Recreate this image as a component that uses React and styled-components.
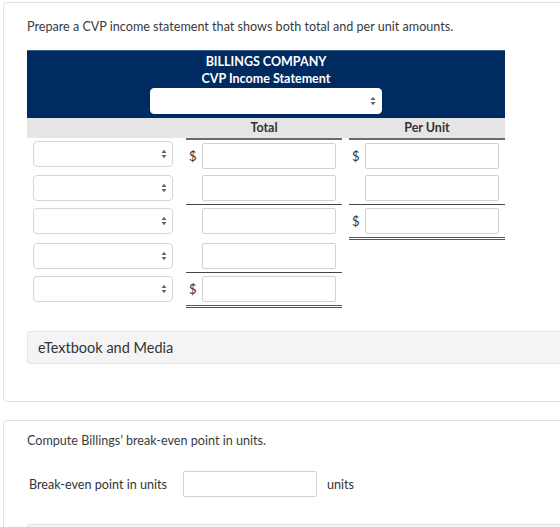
import React from 'react';
import styled, { createGlobalStyle } from 'styled-components';

const GlobalStyle = createGlobalStyle`
  html, body {
    margin: 0;
    padding: 0;
    background: #fff;
    overflow: hidden;
  }
  body {
    font-family: Lato, "Open Sans", Arial, sans-serif;
    color: #333;
  }
`;

const Page = styled.div`
  width: 560px;
  padding-top: 2px;
`;

const Panel = styled.section`
  margin: 0 -40px 18px 3px;
  padding: ${(p) => p.$pad || '15px 23px 37px 23px'};
  border: 1px solid #e2e2e2;
  border-radius: 4px;
  background: #fff;
`;

const Prompt = styled.p`
  margin: 0 0 ${(p) => p.$gap || 14}px;
  font-size: 12.6px;
  line-height: 18px;
  color: #3b3b3b;
`;

const Statement = styled.div`
  width: 478px;
`;

const Banner = styled.div`
  display: flex;
  flex-direction: column;
  align-items: center;
  padding: 2px 0 4px;
  border-top: 1px solid #3d5f8f;
  background: #002b60;
  color: #fff;
  font-size: 12.5px;
  font-weight: 700;
  line-height: 17px;
`;

const Dropdown = styled.div`
  display: flex;
  align-items: center;
  justify-content: flex-end;
  box-sizing: border-box;
  width: ${(p) => p.$width}px;
  height: 26px;
  margin: ${(p) => p.$margin || 0};
  padding-right: 5px;
  border: 1px solid ${(p) => (p.$onDark ? '#fff' : '#d6d6d6')};
  border-radius: 4px;
  background: #fff;
`;

const Row = styled.div`
  display: grid;
  grid-template-columns: 152px 156px 156px;
  column-gap: 7px;
`;

const HeadRow = styled(Row)`
  background: #e5e5e5;
  font-size: 12.5px;
  font-weight: 700;
  line-height: 20px;
  color: #333;
`;

const HeadCell = styled.div`
  text-align: center;
`;

const rules = {
  none: 'none',
  single: '1px solid #444',
  double: '3px double #555',
  head: '2px solid #6a6a6a',
};

const Cell = styled.div`
  display: flex;
  align-items: flex-start;
  padding: 3px ${(p) => (p.$label ? '0' : '6px')} 3px ${(p) => (p.$label ? '6px' : '3px')};
  border-top: ${(p) => rules[p.$top || 'none']};
  border-bottom: ${(p) => rules[p.$bottom || 'none']};
`;

const Dollar = styled.span`
  flex: 0 0 13px;
  font-size: 13px;
  line-height: 26px;
  color: #333;
`;

const Field = styled.input`
  box-sizing: border-box;
  width: ${(p) => (p.$width ? `${p.$width}px` : 'auto')};
  flex: ${(p) => (p.$width ? 'none' : 1)};
  min-width: 0;
  height: 26px;
  margin: 0;
  padding: 0 6px;
  border: 1px solid #d2d2d2;
  border-radius: 2px;
  background: #fff;
  font: inherit;
  outline: none;
`;

const MediaBar = styled.div`
  margin-top: ${(p) => p.$top || 23}px;
  padding: 0 10px;
  height: 31px;
  border: 1px solid #e3e3e3;
  border-radius: 3px;
  background: #f4f4f4;
  font-size: 14.5px;
  line-height: 31px;
  color: #333;
`;

const AnswerRow = styled.div`
  display: flex;
  align-items: center;
  gap: 16px;
  padding-left: 2px;
  font-size: 12.6px;
  color: #333;
`;

const Unit = styled.span`
  margin-left: -6px;
`;

const Arrows = () => (
  <svg width="6" height="10" viewBox="0 0 6 10" aria-hidden="true">
    <path d="M0.5 4 L3 0.8 L5.5 4 Z M0.5 6 L3 9.2 L5.5 6 Z" fill="#666" />
  </svg>
);

const rows = [
  { total: { dollar: true }, per: { dollar: true }, top: 'head' },
  { total: { bottom: 'single' }, per: { bottom: 'single' } },
  { total: {}, per: { dollar: true, bottom: 'double' } },
  { total: { bottom: 'single' }, per: null },
  { total: { dollar: true, bottom: 'double' }, per: null },
];

const Amount = ({ spec, top }) => {
  if (!spec) return <div />;
  return (
    <Cell $top={top} $bottom={spec.bottom}>
      <Dollar>{spec.dollar ? '$' : ''}</Dollar>
      <Field type="text" />
    </Cell>
  );
};

export default function App() {
  return (
    <Page>
      <GlobalStyle />
      <Panel>
        <Prompt>Prepare a CVP income statement that shows both total and per unit amounts.</Prompt>
        <Statement>
          <Banner>
            <div>BILLINGS COMPANY</div>
            <div>CVP Income Statement</div>
            <Dropdown $width={232} $margin="1px 0 0" $onDark>
              <Arrows />
            </Dropdown>
          </Banner>
          <HeadRow>
            <HeadCell />
            <HeadCell>Total</HeadCell>
            <HeadCell>Per Unit</HeadCell>
          </HeadRow>
          {rows.map((r, i) => (
            <Row key={i}>
              <Cell $label>
                <Dropdown $width={140}>
                  <Arrows />
                </Dropdown>
              </Cell>
              <Amount spec={r.total} top={r.top} />
              <Amount spec={r.per} top={r.top} />
            </Row>
          ))}
        </Statement>
        <MediaBar>eTextbook and Media</MediaBar>
      </Panel>
      <Panel $pad="11px 23px 0 23px">
        <Prompt $gap={21}>Compute Billings’ break-even point in units.</Prompt>
        <AnswerRow>
          <span>Break-even point in units</span>
          <Field type="text" $width={134} />
          <Unit>units</Unit>
        </AnswerRow>
        <MediaBar $top={27} />
      </Panel>
    </Page>
  );
}
